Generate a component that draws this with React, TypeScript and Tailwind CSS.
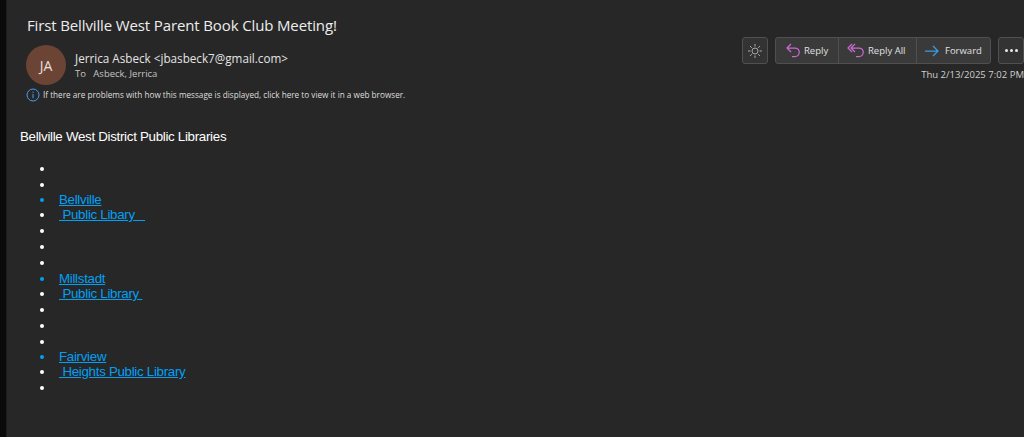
const sans = "font-['Open_Sans','Noto_Sans',sans-serif]";

const rows: { text?: string; link?: boolean; h: string }[] = [
  { h: "h-4" },
  { h: "h-[15px]" },
  { text: "Bellville", link: true, h: "h-[15px]" },
  { text: "\u00a0Public Libary \u00a0\u00a0", h: "h-4" },
  { h: "h-4" },
  { h: "h-4" },
  { h: "h-4" },
  { text: "Millstadt", link: true, h: "h-[15px]" },
  { text: "\u00a0Public Library\u00a0", h: "h-4" },
  { h: "h-4" },
  { h: "h-4" },
  { h: "h-[15px]" },
  { text: "Fairview", link: true, h: "h-[15px]" },
  { text: "\u00a0Heights Public Library", h: "h-4" },
  { h: "h-4" },
];

function ReplyIcon({ double }: { double?: boolean }) {
  return (
    <svg width="18" height="15" viewBox="0 0 18 15" fill="none" stroke="#c968cf" strokeWidth="1.25">
      {double && <path d="M5 1 1 5l4 4" />}
      <path d="M8 1 4 5l4 4M4 5h8a4 4 0 0 1 0 8.5H9" />
    </svg>
  );
}

function ForwardIcon() {
  return (
    <svg width="14" height="12" viewBox="0 0 14 12" fill="none" stroke="#3f9ae0" strokeWidth="1.25">
      <path d="M0 6h13M8 1l5 5-5 5" />
    </svg>
  );
}

function SunIcon() {
  return (
    <svg width="14" height="14" viewBox="0 0 14 14" fill="none" stroke="#a8a8a8" strokeWidth="1">
      <circle cx="7" cy="7" r="3" />
      <path d="M7 0v2.5M7 11.5V14M0 7h2.5M11.5 7H14M2 2l1.8 1.8M10.2 10.2 12 12M12 2l-1.8 1.8M3.8 10.2 2 12" />
    </svg>
  );
}

function InfoIcon() {
  return (
    <svg width="14" height="14" viewBox="0 0 14 14" fill="none" stroke="#479ef5" strokeWidth="1">
      <circle cx="7" cy="7" r="6" />
      <path d="M7 6v4.2M7 3.6v1.2" />
    </svg>
  );
}

export default function App() {
  return (
    <div className="flex h-[437px] w-[1024px] overflow-hidden bg-[#272727] text-white">
      <div className="w-[6px] shrink-0 bg-[#0a0a0a]" />
      <div className="w-px shrink-0 bg-[#1f1f1f]" />
      <div className="min-w-0 flex-1">
        <header className="relative h-[120px]">
          <h1 className={`${sans} pl-5 pt-[15px] text-[15px] leading-[20px] tracking-[-0.13px] text-[#ededed]`}>
            First Bellville West Parent Book Club Meeting!
          </h1>
          <div className="mt-[10px] flex pl-[19px]">
            <div className={`${sans} flex h-10 w-10 items-center justify-center rounded-full bg-[#6b4436] text-[14px] text-[#e8e0dc]`}>
              JA
            </div>
            <div className={`${sans} ml-[9px] pt-[5px]`}>
              <p className="text-[11.7px] leading-[16px] text-[#e4e4e4]">
                Jerrica Asbeck &lt;jbasbeck7@gmail.com&gt;
              </p>
              <p className="mt-px text-[9.5px] leading-[14px] text-[#c4c4c4]">To &nbsp; Asbeck, Jerrica</p>
            </div>
          </div>
          <div className={`${sans} mt-[3px] flex items-center gap-[3px] pl-[19px] text-[8.2px] leading-[14px] text-[#dedede]`}>
            <InfoIcon />
            If there are problems with how this message is displayed, click here to view it in a web browser.
          </div>
          <div className="absolute right-0 top-[37px] flex flex-col items-end">
            <div className={`${sans} flex h-[27px] items-stretch text-[9.5px] text-[#e0e0e0]`}>
              <button className="mr-[7px] flex w-[26px] items-center justify-center rounded-[3px] border border-[#505050] bg-[#333333]">
                <SunIcon />
              </button>
              <div className="flex w-[216px] rounded-[3px] border border-[#505050] bg-[#3a3a3a]">
                <span className="flex w-[63px] items-center gap-[3px] border-r border-[#505050] pl-[7px]">
                  <ReplyIcon /> <span className="pt-[2px]">Reply</span>
                </span>
                <span className="flex w-[78px] items-center gap-[3px] border-r border-[#505050] pl-2">
                  <ReplyIcon double /> <span className="pt-[2px]">Reply All</span>
                </span>
                <span className="flex flex-1 items-center gap-[6px] pl-2">
                  <ForwardIcon /> <span className="pt-[2px]">Forward</span>
                </span>
              </div>
              <button className="ml-[7px] flex w-[26px] items-center justify-center gap-[2px] rounded-[3px] border border-[#505050] bg-[#333333]">
                <span className="h-[3px] w-[3px] rounded-full bg-[#e8e8e8]" />
                <span className="h-[3px] w-[3px] rounded-full bg-[#e8e8e8]" />
                <span className="h-[3px] w-[3px] rounded-full bg-[#e8e8e8]" />
              </button>
            </div>
            <p className={`${sans} mt-[5px] text-[9.55px] leading-[12px] text-[#cfcfcf]`}>Thu 2/13/2025 7:02 PM</p>
          </div>
        </header>
        <div className="pl-[13px] font-['Liberation_Sans',sans-serif] text-[13.33px] tracking-[-0.3px]">
          <p className="pt-[9px] leading-4 text-white">Bellville West District Public Libraries</p>
          <ul className="mt-4 pl-[20px]">
            {rows.map((r, i) => (
              <li key={i} className={`${r.h} flex items-center leading-4`}>
                <span className={`mr-[15px] h-1 w-1 shrink-0 rounded-full ${r.link ? "bg-[#00a0f5]" : "bg-white"}`} />
                {r.text && (
                  <a href="#" className="whitespace-pre text-[#00a0f5] underline">
                    {r.text}
                  </a>
                )}
              </li>
            ))}
          </ul>
        </div>
      </div>
    </div>
  );
}
